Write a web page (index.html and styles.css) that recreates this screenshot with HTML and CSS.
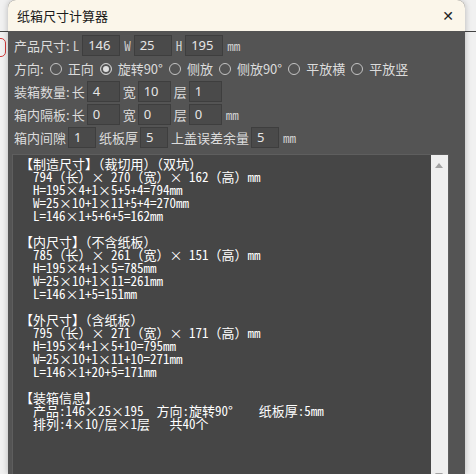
FILE: index.html
```html
<!DOCTYPE html>
<html>
  <head>
    <meta charset="utf-8">
    <title>纸箱尺寸计算器</title>
    <meta name="viewport" content="width=device-width, initial-scale=1">
    <link rel="stylesheet" href="styles.css">
  </head>
  <body>
    <!-- things from the app behind the dialog -->
    <div class="behind-line"></div>
    <div class="behind-mark"></div>

    <div class="window">
      <div class="titlebar">
        <span class="title">纸箱尺寸计算器</span>
        <span class="close">✕</span>
      </div>

      <div class="content">
        <div class="row">
          <span class="label">产品尺寸:</span>
          <span class="unit">L</span>
          <span class="field f38">146</span>
          <span class="unit">W</span>
          <span class="field f38">25</span>
          <span class="unit">H</span>
          <span class="field f38">195</span>
          <span class="unit">mm</span>
        </div>

        <div class="row">
          <span class="label">方向:</span>
          <span class="radio"></span><span class="opt">正向</span>
          <span class="radio checked"></span><span class="opt">旋转90°</span>
          <span class="radio"></span><span class="opt">侧放</span>
          <span class="radio"></span><span class="opt">侧放90°</span>
          <span class="radio"></span><span class="opt">平放横</span>
          <span class="radio"></span><span class="opt">平放竖</span>
        </div>

        <div class="row">
          <span class="label">装箱数量:</span>
          <span class="label">长</span>
          <span class="field f33">4</span>
          <span class="label">宽</span>
          <span class="field f33">10</span>
          <span class="label">层</span>
          <span class="field f33">1</span>
        </div>

        <div class="row">
          <span class="label">箱内隔板:</span>
          <span class="label">长</span>
          <span class="field f33">0</span>
          <span class="label">宽</span>
          <span class="field f33">0</span>
          <span class="label">层</span>
          <span class="field f33">0</span>
          <span class="unit">mm</span>
        </div>

        <div class="row">
          <span class="label">箱内间隙</span>
          <span class="field f28">1</span>
          <span class="label">纸板厚</span>
          <span class="field f28">5</span>
          <span class="label">上盖误差余量</span>
          <span class="field f28">5</span>
          <span class="unit">mm</span>
        </div>

        <div class="result">
          <pre class="result-text">【制造尺寸】（裁切用）（双坑）
  794（长）× 270（宽）× 162（高）mm
  H=195×4+1×5+5+4=794mm
  W=25×10+1×11+5+4=270mm
  L=146×1+5+6+5=162mm

【内尺寸】（不含纸板）
  785（长）× 261（宽）× 151（高）mm
  H=195×4+1×5=785mm
  W=25×10+1×11=261mm
  L=146×1+5=151mm

【外尺寸】（含纸板）
  795（长）× 271（宽）× 171（高）mm
  H=195×4+1×5+10=795mm
  W=25×10+1×11+10=271mm
  L=146×1+20+5=171mm

【装箱信息】
  产品:146×25×195  方向:旋转90°    纸板厚:5mm
  排列:4×10/层×1层   共40个</pre>
          <div class="scrollbar">
            <span class="arrow up"></span>
            <span class="arrow down"></span>
          </div>
        </div>
      </div>
    </div>
  </body>
</html>
```

FILE: styles.css
```css
body {
  margin: 0;
  background: #f1f1f1;
  font-family: "Noto Sans CJK SC", "Microsoft YaHei", sans-serif;
  overflow: hidden;
}

.behind-line {
  position: absolute;
  left: 0;
  right: 0;
  top: 31px;
  height: 1px;
  background: #444;
}

.behind-mark {
  position: absolute;
  left: -12px;
  top: 38px;
  width: 16px;
  height: 17px;
  border: 1.5px solid #d23a3a;
  border-radius: 5px;
}

.window {
  position: relative;
  margin-left: 8px;
  width: 457px;
  height: 474px;
  background: #545454;
  border-radius: 8px 8px 0 0;
  overflow: hidden;
  box-shadow: 0 0 6px rgba(0, 0, 0, 0.25);
}

.titlebar {
  height: 31px;
  background: #fbf6ea;
  display: flex;
  align-items: center;
  justify-content: space-between;
  padding: 0 11px 0 9px;
}

.title {
  font-size: 13px;
  color: #1a1a1a;
}

.close {
  font-size: 14px;
  color: #222;
  font-family: "DejaVu Sans", sans-serif;
}

.content {
  padding: 3px 0 0 6px;
}

.row {
  display: flex;
  align-items: center;
  height: 23px;
  color: #dcdcdc;
  font-size: 13px;
}

.label {
  margin-right: 2px;
}

.unit {
  font-family: "Noto Sans Mono CJK SC", "Liberation Mono", monospace;
  font-size: 13px;
  margin: 0 3px 0 1px;
  color: #d0d0d0;
}

.field {
  height: 19px;
  line-height: 19px;
  background: #4a4a4a;
  border: 1px solid #3e3e3e;
  color: #e6e6e6;
  font-family: "Noto Sans", sans-serif;
  font-size: 13px;
  padding-left: 5px;
  box-sizing: content-box;
  margin-right: 3px;
}

.f38 { width: 31px; }
.f33 { width: 26px; }
.f28 { width: 21px; }

.radio {
  width: 12px;
  height: 12px;
  border: 1px solid #c4c4c4;
  border-radius: 50%;
  margin: 0 6px 0 4px;
  box-sizing: border-box;
}

.radio.checked {
  background: #8a8a8a;
  border-color: #d0d0d0;
  box-shadow: inset 0 0 0 2px #555, inset 0 0 0 6px #e0e0e0;
}

.opt {
  margin-right: 2px;
}

.result {
  display: flex;
  margin: 5px 0 0 -2px;
  width: 437px;
  height: 330px;
  background: #464646;
  border: 1px solid #5e5e5e;
  box-sizing: border-box;
}

.result-text {
  flex: 1;
  margin: 0;
  padding: 2px 0 0 7px;
  font-family: "Noto Sans Mono CJK SC", "Noto Sans CJK SC", monospace;
  font-size: 13px;
  line-height: 13px;
  color: #ffffff;
}

.scrollbar {
  width: 17px;
  background: #efefef;
  position: relative;
}

.arrow {
  position: absolute;
  left: 4px;
  width: 0;
  height: 0;
  border-left: 4.5px solid transparent;
  border-right: 4.5px solid transparent;
}

.arrow.up {
  top: 8px;
  border-bottom: 5px solid #a3a3a3;
}

.arrow.down {
  bottom: 5px;
  border-top: 5px solid #a3a3a3;
}
```
